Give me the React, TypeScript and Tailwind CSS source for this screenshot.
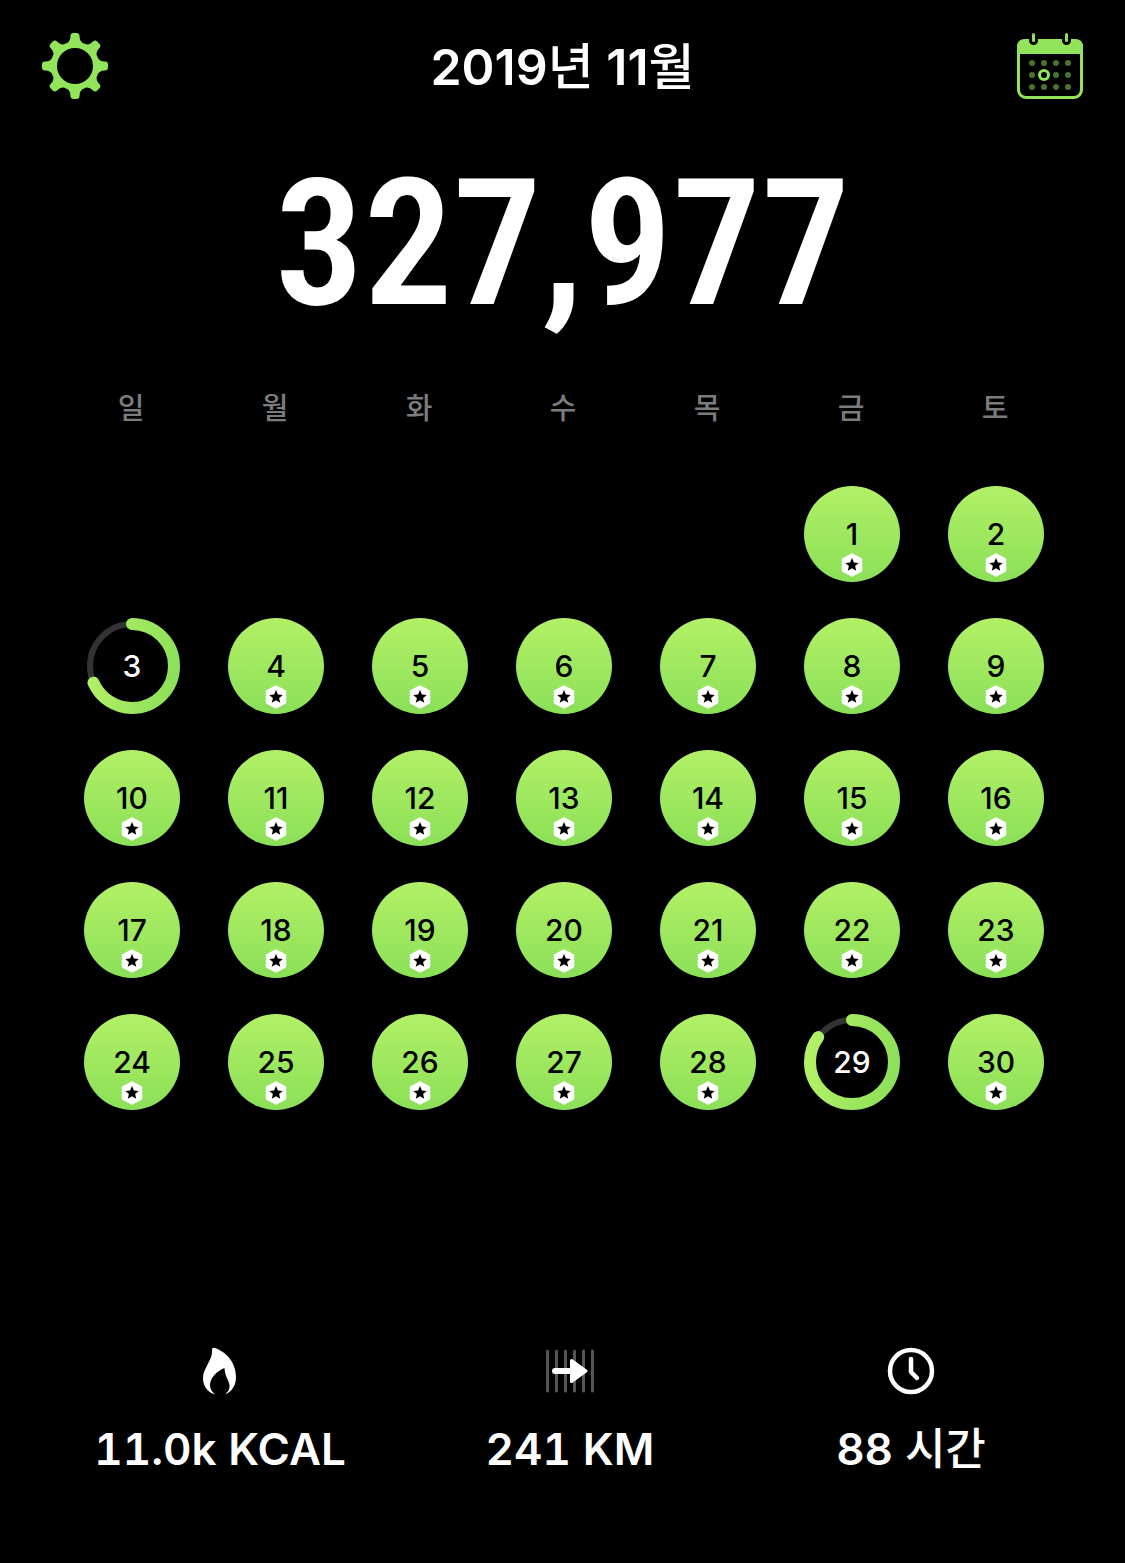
import { useId } from "react";

const WEEKDAYS = ["일", "월", "화", "수", "목", "금", "토"];
const FIRST_WEEKDAY = 5;
const DAYS_IN_MONTH = 30;

// Days that missed the goal, with the share that was reached.
const PARTIAL: Record<number, number> = { 3: 0.685, 29: 0.851 };

const TEETH = [0, 45, 90, 135, 180, 225, 270, 315];

function buildWeeks(): (number | null)[][] {
  const cells: (number | null)[] = Array(FIRST_WEEKDAY).fill(null);
  for (let day = 1; day <= DAYS_IN_MONTH; day++) cells.push(day);
  const weeks: (number | null)[][] = [];
  for (let i = 0; i < cells.length; i += 7) weeks.push(cells.slice(i, i + 7));
  return weeks;
}

function GearIcon() {
  return (
    <svg viewBox="0 0 66 66" className="size-[66px]" aria-hidden="true">
      <g fill="#92e45b">
        {TEETH.map((angle) => (
          <path
            key={angle}
            transform={`rotate(${angle} 33 33)`}
            d="M28.5 3Q28.5 0 31.5 0H34.5Q37.5 0 37.5 3Q37.5 9.500 43 11L40 18H26L23 11Q28.500 9.500 28.500 3Z"
          />
        ))}
      </g>
      <circle cx="33" cy="33" r="20.5" fill="none" stroke="#92e45b" strokeWidth="5" />
      <circle cx="33" cy="33" r="18" fill="#000" />
    </svg>
  );
}

function CalendarIcon() {
  return (
    <svg viewBox="0 0 66 66" className="size-[66px]" aria-hidden="true">
      <rect x="1.500" y="7.500" width="63" height="57" rx="7.500" fill="none" stroke="#92e45b" strokeWidth="3" />
      <path d="M0 21V14Q0 6 8 6H58Q66 6 66 14V21Z" fill="#92e45b" />
      {[16.5, 49.5].map((x) => (
        <g key={x} strokeLinecap="round">
          <path d={`M${x} 0V7.500`} stroke="#000" strokeWidth="9" />
          <path d={`M${x} 1.500V7.500`} stroke="#92e45b" strokeWidth="3" />
        </g>
      ))}
      {[30, 42, 54].map((y) =>
        [15, 27, 39, 51].map((x) =>
          x === 27 && y === 42 ? (
            <circle key={`${x}-${y}`} cx={x} cy={y} r="4.500" fill="none" stroke="#92e45b" strokeWidth="3" />
          ) : (
            <circle key={`${x}-${y}`} cx={x} cy={y} r="3" fill="#49722e" />
          ),
        ),
      )}
    </svg>
  );
}

function StarBadge() {
  return (
    <svg viewBox="0 0 22 24" className="absolute bottom-[5px] left-1/2 h-6 w-[22px] -translate-x-1/2" aria-hidden="true">
      <path
        d="M11 1.500L20 6.300V17.700L11 22.500L2 17.700V6.300Z"
        fill="#fff"
        stroke="#fff"
        strokeWidth="2.500"
        strokeLinejoin="round"
      />
      <path
        d="M11 5L12.900 9.500L17.800 9.900L14.100 13.100L15.200 17.800L11 15.300L6.800 17.800L7.900 13.100L4.200 9.900L9.100 9.500Z"
        fill="#000"
      />
    </svg>
  );
}

function ProgressRing({ value }: { value: number }) {
  const id = useId();
  return (
    <svg viewBox="0 0 96 96" className="absolute inset-0 size-24" aria-hidden="true">
      <defs>
        <linearGradient id={id} gradientUnits="userSpaceOnUse" x1="54" y1="6" x2="42" y2="90">
          <stop offset="0" stopColor="#b2f066" />
          <stop offset="1" stopColor="#8ee05a" />
        </linearGradient>
      </defs>
      <circle cx="48" cy="48" r="42" fill="none" stroke="#333" strokeWidth="6" />
      <circle
        cx="48"
        cy="48"
        r="42"
        fill="none"
        stroke={`url(#${id})`}
        strokeWidth="12"
        strokeLinecap="round"
        pathLength="1"
        strokeDasharray={`${value} 1`}
        transform="rotate(-90 48 48)"
      />
    </svg>
  );
}

function Day({ day }: { day: number }) {
  const partial = PARTIAL[day];
  const base = "relative mx-auto flex size-24 items-center justify-center rounded-full text-[30px] leading-9 font-medium";
  if (partial !== undefined) {
    return (
      <button type="button" className={`${base} text-white`}>
        <ProgressRing value={partial} />
        <span className="relative">{day}</span>
      </button>
    );
  }
  return (
    <button type="button" className={`${base} bg-linear-to-b from-[#b2f066] to-[#8ae058] text-black`}>
      {day}
      <StarBadge />
    </button>
  );
}

function FlameIcon() {
  return (
    <svg viewBox="0 0 48 48" className="size-12" aria-hidden="true">
      <path
        d="M19 1C30 5 40 15 40 30C40 38 36 45 29 47.500C33 44 34.500 40 33 36C31.500 31 29 29 28.500 21C21 24 14 31 14 38C14 42 16 45 19 47.500C11 45 7 39 7 31C7 21 17 13 16 3Q16 0 19 1Z"
        fill="#fff"
      />
    </svg>
  );
}

function DistanceIcon() {
  return (
    <svg viewBox="0 0 48 48" className="size-12" aria-hidden="true">
      <path
        d="M1.500 4V44M10.500 4V44M19.500 4V44M28.500 4V44M37.500 4V44M46.500 4V44"
        stroke="#555"
        strokeWidth="3"
        strokeLinecap="round"
      />
      <path d="M9 24H28" stroke="#fff" strokeWidth="6" strokeLinecap="round" />
      <path
        d="M25.500 13.500L40 24L25.500 34.500Z"
        fill="#fff"
        stroke="#fff"
        strokeWidth="3"
        strokeLinejoin="round"
      />
    </svg>
  );
}

function ClockIcon() {
  return (
    <svg viewBox="0 0 48 48" className="size-12" fill="none" stroke="#fff" aria-hidden="true">
      <circle cx="24" cy="24" r="21" strokeWidth="4.500" />
      <path d="M24 12V25L30 31" strokeWidth="4.500" strokeLinecap="round" strokeLinejoin="round" />
    </svg>
  );
}

const STATS = [
  { value: "11.0k", unit: "KCAL", unitWeight: "font-semibold", Icon: FlameIcon },
  { value: "241", unit: "KM", unitWeight: "font-semibold", Icon: DistanceIcon },
  { value: "88", unit: "시간", unitWeight: "font-medium", Icon: ClockIcon },
];

export default function App() {
  return (
    <main className="min-h-screen bg-black font-['Inter','Noto_Sans_CJK_KR',sans-serif] text-white">
      <header className="flex items-start justify-between px-[42px] pt-[33px]">
        <button type="button" aria-label="설정">
          <GearIcon />
        </button>
        <h1 className="text-[50px] leading-[68px] font-semibold">
          2019<span className="font-medium">년</span> 11<span className="font-medium">월</span>
        </h1>
        <button type="button" aria-label="달력">
          <CalendarIcon />
        </button>
      </header>

      <p className="mt-12 text-center font-['Roboto_Condensed','Roboto',sans-serif] text-[177px] leading-[190px] font-semibold">
        327,977
      </p>

      <div className="pt-[46px] pr-[57px] pl-[60px]">
        <table className="w-full table-fixed">
          <thead>
            <tr>
              {WEEKDAYS.map((name) => (
                <th key={name} scope="col" className="pr-0.5 pb-[53px] text-[29px] leading-[48px] font-medium text-[#7c7c7c]">
                  {name}
                </th>
              ))}
            </tr>
          </thead>
          <tbody>
            {buildWeeks().map((week, index) => (
              <tr key={index}>
                {week.map((day, column) => (
                  <td key={column} className="p-0 pb-9">
                    {day !== null ? <Day day={day} /> : null}
                  </td>
                ))}
              </tr>
            ))}
          </tbody>
        </table>
      </div>

      <ul className="grid grid-cols-[350fr_350fr_332fr] pt-[201px] pr-12 pb-16 pl-[45px]">
        {STATS.map(({ value, unit, unitWeight, Icon }) => (
          <li key={unit} className="flex flex-col items-center gap-6">
            <Icon />
            <p className="text-[44px] leading-[60px] font-semibold tabular-nums">
              {value} <span className={unitWeight}>{unit}</span>
            </p>
          </li>
        ))}
      </ul>
    </main>
  );
}
